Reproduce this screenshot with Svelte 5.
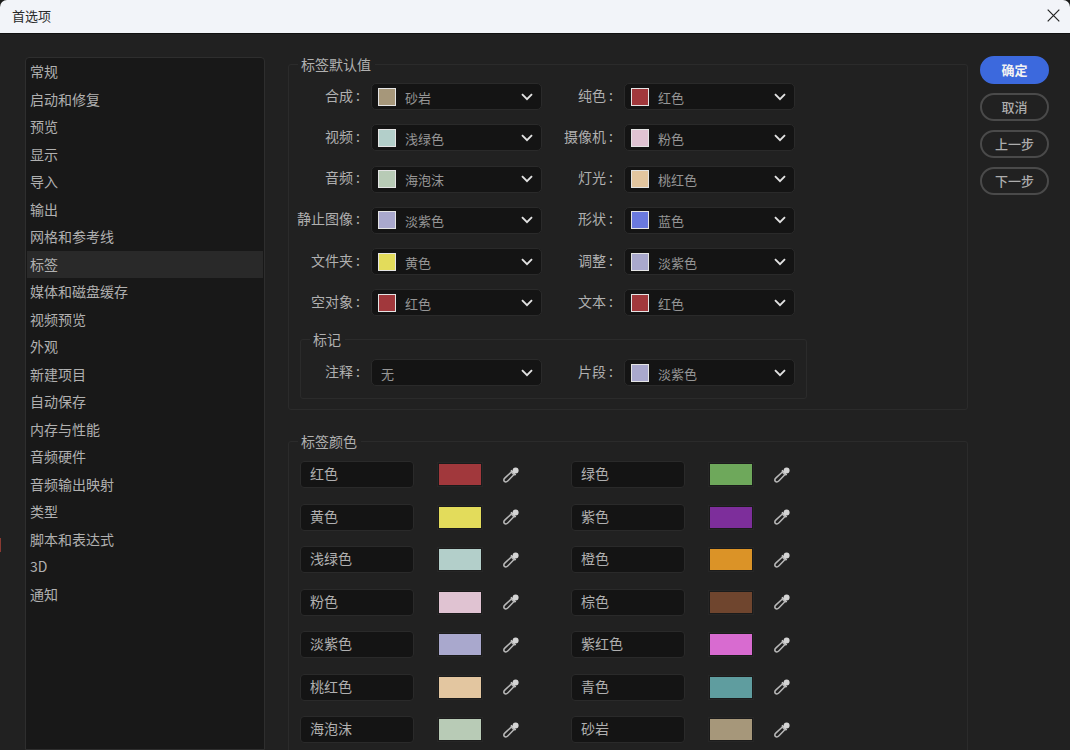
<script>
	const nav = ['常规', '启动和修复', '预览', '显示', '导入', '输出', '网格和参考线', '标签', '媒体和磁盘缓存', '视频预览', '外观', '新建项目', '自动保存', '内存与性能', '音频硬件', '音频输出映射', '类型', '脚本和表达式', '3D', '通知']
	const colors = {
		红色: '#a1383c', 黄色: '#e3dc5b', 浅绿色: '#b3cfca', 粉色: '#e0c3d2', 淡紫色: '#a9a8cd', 桃红色: '#e3c6a0', 海泡沫: '#b8cbb6',
		绿色: '#6ea85b', 紫色: '#7d2e9b', 橙色: '#db9327', 棕色: '#6f452e', 紫红色: '#d86bd0', 青色: '#5f9d9f', 砂岩: '#a6977a', 蓝色: '#6a79de'
	}
	const defaults = [
		['合成', '砂岩'], ['纯色', '红色'],
		['视频', '浅绿色'], ['摄像机', '粉色'],
		['音频', '海泡沫'], ['灯光', '桃红色'],
		['静止图像', '淡紫色'], ['形状', '蓝色'],
		['文件夹', '黄色'], ['调整', '淡紫色'],
		['空对象', '红色'], ['文本', '红色']
	]
	const labels = ['红色', '绿色', '黄色', '紫色', '浅绿色', '橙色', '粉色', '棕色', '淡紫色', '紫红色', '桃红色', '青色', '海泡沫', '砂岩']
	const buttons = ['取消', '上一步', '下一步']
</script>

{#snippet dropdown(label, value)}
	<span class="label">{label} :</span>
	<div class="select">
		{#if value}
			<i class="chip" style="background:{colors[value]}"></i>
			<span class="value">{value}</span>
		{:else}
			<span class="value none">无</span>
		{/if}
		<svg class="chevron" width="12" height="8" viewBox="0 0 12 8"><path d="M1 1.2 6 6.2 11 1.2" fill="none" stroke="#e2e2e2" stroke-width="1.9" /></svg>
	</div>
{/snippet}

<div class="window">
	<i class="sliver"></i>
	<header>
		<span>首选项</span>
		<svg width="13" height="13" viewBox="0 0 13 13"><path d="M.7.7 12.3 12.3M12.3.7.7 12.3" stroke="#222" stroke-width="1.2" fill="none" /></svg>
	</header>
	<div class="body">
		<nav>
			{#each nav as item}
				<div class="item" class:active={item === '标签'}>{item}</div>
			{/each}
		</nav>
		<main>
			<fieldset class="group first">
				<legend>标签默认值</legend>
				<div class="grid">
					{#each defaults as d}
						{@render dropdown(d[0], d[1])}
					{/each}
				</div>
				<fieldset class="group marks">
					<legend>标记</legend>
					<div class="grid">
						{@render dropdown('注释', null)}
						{@render dropdown('片段', '淡紫色')}
					</div>
				</fieldset>
			</fieldset>
			<fieldset class="group second">
				<legend>标签颜色</legend>
				<div class="colors">
					{#each labels as name}
						<div class="color-row">
							<div class="input">{name}</div>
							<div class="swatch"><i style="background:{colors[name]}"></i></div>
							<svg class="dropper" width="18" height="18" viewBox="0 0 18 18">
								<path d="M9.6 3.8 14.2 8.4 12.9 9.7 8.3 5.1Z" fill="#cfcfcf" />
								<circle cx="13.6" cy="4.4" r="3" fill="#d4d4d4" />
								<path d="M9.4 6 12 8.6 6 14.8Q4 16.8 2.4 15.4 1 13.8 3 11.9Z" fill="none" stroke="#b8b8b8" stroke-width="1.5" />
							</svg>
						</div>
					{/each}
				</div>
			</fieldset>
		</main>
		<aside>
			<button class="primary">确定</button>
			{#each buttons as b}
				<button>{b}</button>
			{/each}
		</aside>
	</div>
</div>

<style>
	:global(body) {
		margin: 0;
		background: #1b1b1b;
	}

	.window {
		width: 1070px;
		height: 750px;
		overflow: hidden;
		position: relative;
		display: flex;
		flex-direction: column;
		font-family: "Noto Sans CJK SC", "Liberation Sans", sans-serif;
		font-size: 14px;
		color: #b0b0b0;
	}

	.sliver {
		position: absolute;
		left: 0;
		top: 538px;
		width: 1px;
		height: 14px;
		background: #8a3a32;
	}

	header {
		height: 34px;
		flex: none;
		box-sizing: border-box;
		background: #f2f4f9;
		border-radius: 7px 7px 0 0;
		border-bottom: 1px solid #111;
		display: flex;
		align-items: center;
		justify-content: space-between;
		padding: 0 10px 2px 12px;
		color: #2a2a2a;
		font-size: 13px;
	}

	.body {
		flex: 1;
		min-height: 0;
		background: #212121;
		display: flex;
		align-items: stretch;
	}

	nav {
		width: 240px;
		box-sizing: border-box;
		margin: 23px 0 0 25px;
		padding: 0 1px;
		background: #181818;
		border: 1px solid #2e2e2e;
		border-radius: 4px 4px 0 0;
		flex: none;
	}

	.item {
		height: 27.5px;
		line-height: 27px;
		padding-left: 3px;
		white-space: nowrap;
	}

	.item.active {
		background: #292929;
	}

	main {
		width: 680px;
		flex: none;
		margin-left: 23px;
		padding-top: 20px;
	}

	fieldset {
		margin: 0;
		min-width: 0;
		box-sizing: border-box;
		border: 1px solid #2b2b2b;
		border-radius: 3px;
	}

	legend {
		padding: 0 4px 0 3px;
		line-height: 20px;
		margin-left: 9px;
	}

	.first {
		height: 356px;
		padding: 9px 0 0 0;
	}

	.grid {
		display: grid;
		grid-template-columns: 71px 171px 60px 171px;
		column-gap: 11px;
		row-gap: 14.3px;
		align-items: center;
	}

	.label {
		text-align: right;
		white-space: nowrap;
		padding-bottom: 4px;
	}

	.select {
		height: 27px;
		box-sizing: border-box;
		background: #141414;
		border: 1px solid #2a2a2a;
		border-radius: 5px;
		display: flex;
		align-items: center;
		padding-left: 6px;
		font-size: 13px;
		color: #969696;
	}

	.chip {
		width: 18px;
		height: 18px;
		box-sizing: border-box;
		border: 1px solid #e4e4e4;
		margin-right: 9px;
		flex: none;
	}

	.value {
		padding-top: 1px;
	}

	.none {
		padding-left: 3px;
	}

	.chevron {
		margin-left: auto;
		margin-right: 8px;
	}

	.marks {
		width: 507px;
		height: 70px;
		margin: 13px 0 0 11px;
		padding: 10px 0 0 0;
	}

	.marks .grid {
		grid-template-columns: 59px 171px 60px 171px;
	}

	.second {
		margin-top: 21px;
		height: 340px;
		padding: 10px 0 0 11px;
	}

	.second legend {
		margin-left: -2px;
	}

	.colors {
		display: grid;
		grid-template-columns: 271px 271px;
		row-gap: 15.5px;
	}

	.color-row {
		display: flex;
		align-items: center;
		height: 27px;
	}

	.input {
		width: 114px;
		height: 27px;
		box-sizing: border-box;
		background: #141414;
		border: 1px solid #2a2a2a;
		border-radius: 4px;
		padding-left: 9px;
		line-height: 22px;
	}

	.swatch {
		margin-left: 23px;
		width: 46px;
		height: 25px;
		box-sizing: border-box;
		padding: 1px;
		background: #1b1b1b;
		border: 1px solid #262626;
		display: flex;
	}

	.swatch i {
		flex: 1;
	}

	.dropper {
		margin-left: 19px;
	}

	aside {
		margin: 22px 0 0 12px;
		display: flex;
		flex-direction: column;
		gap: 9.5px;
	}

	button {
		width: 69px;
		height: 27.5px;
		box-sizing: border-box;
		padding: 0;
		font: inherit;
		font-size: 13px;
		font-weight: 500;
		color: #adadad;
		background: transparent;
		border: 2px solid #4a4a4a;
		border-radius: 14px;
	}

	button.primary {
		background: #3c69dd;
		border-color: #3c69dd;
		color: #f2f2f2;
		font-weight: 700;
	}
</style>
